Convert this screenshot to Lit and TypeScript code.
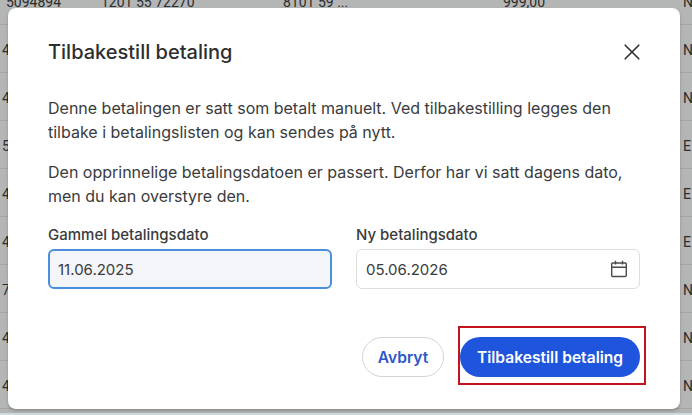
import { LitElement, html, css } from "lit";
import { customElement } from "lit/decorators.js";

const rows: [string, string, string, string, string][] = [
  ["5094894", "1201 55 72270", "8101 59 ...", "999,00", "N"],
  ["4", "", "", "", "N"],
  ["4", "", "", "", "N"],
  ["5", "", "", "", "E"],
  ["4", "", "", "", "E"],
  ["4", "", "", "", "E"],
  ["7", "", "", "", "N"],
  ["4", "", "", "", "N"],
  ["4", "", "", "", "N"],
];

@customElement("app-root")
export class AppRoot extends LitElement {
  static styles = css`
    :host {
      display: block;
      position: relative;
      width: 692px;
      height: 415px;
      overflow: hidden;
      background: #b4b6b6;
      font-family: Inter, "Liberation Sans", sans-serif;
    }
    .table {
      margin-top: -23px;
      color: #2b2c2c;
      font-family: Roboto, "Liberation Sans", sans-serif;
      font-size: 14px;
    }
    .row {
      display: grid;
      grid-template-columns: 99px 182px 220px 180px 1fr;
      height: 48px;
      box-sizing: border-box;
      align-items: center;
      border-bottom: 1px solid #a3a5a5;
      padding: 3px 0 0 2px;
    }
    .row:first-child .id { padding-left: 4px; }
    .scrim-bottom {
      position: absolute;
      left: 0;
      right: 0;
      bottom: 0;
      height: 2px;
      background: #cfdadb;
    }
    .dialog {
      position: absolute;
      left: 8px;
      top: 8px;
      width: 672px;
      height: 401px;
      box-sizing: border-box;
      background: #fff;
      border-radius: 8px;
      padding: 32px 40px;
      display: flex;
      flex-direction: column;
      color: #3a3b3d;
      box-shadow: 0 2px 3px rgba(0, 0, 0, 0.22);
    }
    .head {
      display: flex;
      justify-content: space-between;
      align-items: center;
      height: 24px;
      margin-bottom: 32px;
    }
    h2 {
      margin: 0;
      font-size: 20px;
      font-weight: 500;
      line-height: 24px;
      color: #2d2e30;
    }
    .close {
      width: 24px;
      height: 24px;
      padding: 0;
      margin-right: -4px;
      border: 0;
      background: none;
      display: flex;
      align-items: center;
      justify-content: center;
      color: #2d2e30;
    }
    p {
      margin: 0 0 16px;
      font-size: 16px;
      line-height: 24px;
    }
    .fields {
      display: grid;
      grid-template-columns: 284px 284px;
      gap: 24px;
    }
    .field { display: flex; flex-direction: column; gap: 3px; }
    label {
      font-size: 15px;
      font-weight: 450;
      line-height: 22px;
      color: #3a3b3d;
    }
    .box {
      height: 40px;
      box-sizing: border-box;
      border: 1px solid #dcdfe2;
      border-radius: 6px;
      display: flex;
      align-items: center;
      padding: 0 11px 0 9px;
    }
    .box.focus {
      border: 2px solid #4c8ede;
      background: #f3f5f8;
      padding: 0 8px;
    }
    input {
      flex: 1;
      min-width: 0;
      border: 0;
      outline: 0;
      padding: 0;
      background: transparent;
      font: inherit;
      font-size: 15px;
      color: #3a3b3d;
    }
    .actions {
      margin-top: auto;
      display: flex;
      justify-content: flex-end;
      gap: 16px;
    }
    button.btn {
      height: 40px;
      border-radius: 20px;
      font: inherit;
      font-size: 15.6px;
      font-weight: 600;
      cursor: pointer;
    }
    .ghost {
      width: 82px;
      background: #fff;
      border: 1px solid #d2d5d8;
      color: #2c56c9;
      padding: 0;
    }
    .primary-wrap { position: relative; display: flex; }
    .primary {
      width: 180px;
      background: #1f55dc;
      border: 0;
      color: #fff;
      padding: 0;
    }
    .mark {
      position: absolute;
      left: -2px;
      right: -6px;
      top: -11px;
      bottom: -8px;
      border: 2px solid #c4121f;
      pointer-events: none;
    }
  `;

  render() {
    return html`
      <div class="table">
        ${rows.map(
          (r) => html`<div class="row">
            <span class="id">${r[0]}</span><span>${r[1]}</span><span>${r[2]}</span><span>${r[3]}</span><span>${r[4]}</span>
          </div>`
        )}
      </div>
      <div class="scrim-bottom"></div>
      <section class="dialog">
        <div class="head">
          <h2>Tilbakestill betaling</h2>
          <button class="close" aria-label="Lukk">
            <svg width="24" height="24" viewBox="0 0 24 24" fill="none" stroke="currentColor" stroke-width="1.6" stroke-linecap="round">
              <path d="M5.2 5.2 18.8 18.8M18.8 5.2 5.2 18.8" />
            </svg>
          </button>
        </div>
        <p>Denne betalingen er satt som betalt manuelt. Ved tilbakestilling legges den tilbake i betalingslisten og kan sendes på nytt.</p>
        <p>Den opprinnelige betalingsdatoen er passert. Derfor har vi satt dagens dato, men du kan overstyre den.</p>
        <div class="fields">
          <div class="field">
            <label>Gammel betalingsdato</label>
            <div class="box focus"><input value="11.06.2025" readonly /></div>
          </div>
          <div class="field">
            <label>Ny betalingsdato</label>
            <div class="box">
              <input value="05.06.2026" />
              <svg width="18" height="18" viewBox="0 0 18 18" fill="none" stroke="#4a4b4d" stroke-width="1.4">
                <rect x="1.7" y="3" width="14.6" height="13.5" rx="1" />
                <path d="M1.7 7.2H16.3M5.5 .8V4.6M12.5 .8V4.6" />
              </svg>
            </div>
          </div>
        </div>
        <div class="actions">
          <button class="btn ghost">Avbryt</button>
          <div class="primary-wrap">
            <button class="btn primary">Tilbakestill betaling</button>
            <div class="mark"></div>
          </div>
        </div>
      </section>
    `;
  }
}
